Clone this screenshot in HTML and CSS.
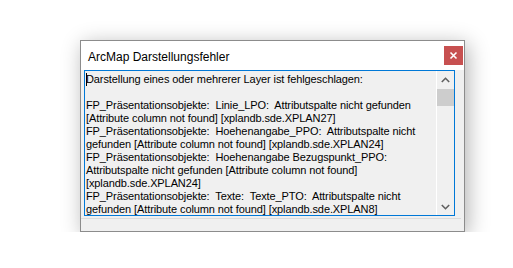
FILE: index.html
```html
<!DOCTYPE html>
<html lang="de">
<head>
    <meta charset="UTF-8">
    <meta name="viewport" content="width=device-width, initial-scale=1.0">
    <title>ArcMap Darstellungsfehler</title>
    <link rel="stylesheet" href="styles.css">
</head>
<body>
    <!-- Fehlerdialog -->
    <div class="window">
        <div class="titlebar">
            <span class="title">ArcMap Darstellungsfehler</span>
            <div class="close">
                <svg width="9" height="9" viewBox="0 0 9 9">
                    <path d="M1.5 1.5 L7.5 7.5 M7.5 1.5 L1.5 7.5" stroke="#fff" stroke-width="1.6"/>
                </svg>
            </div>
        </div>

        <div class="content">
            <div class="textbox">
                <div class="text"><span class="caret"></span>Darstellung eines oder mehrerer Layer ist fehlgeschlagen:

FP_Präsentationsobjekte:  Linie_LPO:  Attributspalte nicht gefunden
[Attribute column not found] [xplandb.sde.XPLAN27]
FP_Präsentationsobjekte:  Hoehenangabe_PPO:  Attributspalte nicht
gefunden [Attribute column not found] [xplandb.sde.XPLAN24]
FP_Präsentationsobjekte:  Hoehenangabe Bezugspunkt_PPO:
Attributspalte nicht gefunden [Attribute column not found]
[xplandb.sde.XPLAN24]
FP_Präsentationsobjekte:  Texte:  Texte_PTO:  Attributspalte nicht
gefunden [Attribute column not found] [xplandb.sde.XPLAN8]</div>

                <!-- Scrollbar -->
                <div class="scrollbar">
                    <div class="arrow">
                        <svg width="9" height="6" viewBox="0 0 9 6">
                            <path d="M0.8 5 L4.5 1.3 L8.2 5" fill="none" stroke="#606060" stroke-width="1.6"/>
                        </svg>
                    </div>
                    <div class="track">
                        <div class="thumb"></div>
                    </div>
                    <div class="arrow">
                        <svg width="9" height="6" viewBox="0 0 9 6">
                            <path d="M0.8 1 L4.5 4.7 L8.2 1" fill="none" stroke="#606060" stroke-width="1.6"/>
                        </svg>
                    </div>
                </div>
            </div>
            <div class="separator"></div>
        </div>
    </div>
</body>
</html>
```

FILE: styles.css
```css
body{
    margin: 0;
    background-color: #fff;
    font-family: "Liberation Sans", Arial, sans-serif;
}
.window{
    box-sizing: border-box;
    width: 385px;
    height: 192px;
    margin: 40px 0 0 80px;
    border: 1px solid #8c8c8c;
    background-color: #f0f0f0;
    box-shadow: 3px 4px 20px rgba(0, 0, 0, 0.3);
    display: flex;
    flex-direction: column;
}
.titlebar{
    height: 29px;
    background-color: #fff;
    display: flex;
    align-items: flex-start;
    justify-content: space-between;
    padding-left: 7px;
}
.title{
    font-size: 12px;
    line-height: 14px;
    margin-top: 9px;
    color: #000;
}
.close{
    width: 19px;
    height: 19px;
    margin: 5px 1px 0 0;
    background-color: #c75050;
    display: flex;
    align-items: center;
    justify-content: center;
}
.content{
    padding-left: 3px;
    display: flex;
    flex-direction: column;
}
.textbox{
    box-sizing: border-box;
    width: 371px;
    height: 146px;
    border: 1px solid #0078d7;
    display: flex;
}
.text{
    flex: 1;
    overflow: hidden;
    padding: 2px 0 0 1px;
    white-space: pre;
    font-size: 11px;
    line-height: 13px;
    letter-spacing: -0.1px;
    color: #000;
}
.caret{
    display: inline-block;
    width: 1px;
    height: 13px;
    margin-right: -1px;
    vertical-align: -3px;
    background-color: #000;
}
.scrollbar{
    width: 17px;
    border-left: 1px solid #fff;
    display: flex;
    flex-direction: column;
}
.arrow{
    height: 17px;
    display: flex;
    align-items: center;
    justify-content: center;
}
.track{
    flex: 1;
    padding-top: 1px;
}
.thumb{
    height: 17px;
    background-color: #cdcdcd;
}
.separator{
    height: 1px;
    margin: 2px 3px 0 -3px;
    background-color: #dcdcdc;
}
```
